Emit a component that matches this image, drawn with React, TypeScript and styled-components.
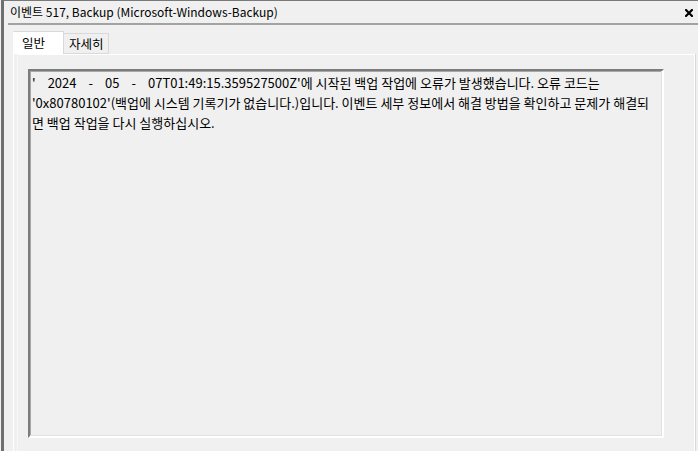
import React from "react";
import styled, { createGlobalStyle } from "styled-components";

const GlobalStyle = createGlobalStyle`
  html, body { margin: 0; padding: 0; background: #f0f0f0; overflow: hidden; }
  body { font-family: "Noto Sans CJK KR", "Noto Sans", sans-serif; }
`;

const Window = styled.div`
  width: 708px;
  height: 451px;
  margin-left: 1px;
  border-left: 3px solid #6f6f6f;
  border-top: 1px solid #7a7a7a;
  background: #f0f0f0;
  display: flex;
  flex-direction: column;
  box-sizing: border-box;
  font-size: 12px;
  color: #000;
`;

const TitleBar = styled.div`
  height: 22px;
  display: flex;
  align-items: center;
  justify-content: space-between;
  padding: 0 0 0 6px;
  width: 694px;
  box-sizing: border-box;
`;

const TitleText = styled.span`
  font-size: 12px;
  line-height: 22px;
  white-space: nowrap;
`;

const CloseButton = styled.button`
  border: 0;
  background: transparent;
  padding: 0;
  margin: 1px 5px 0 0;
  width: 8px;
  height: 8px;
  display: flex;
  cursor: default;
`;

const Divider = styled.div`
  height: 2px;
  margin-left: 4px;
  background: #a2a2a2;
`;

const Body = styled.div`
  flex: 1;
  display: flex;
  flex-direction: column;
  padding: 6px 0 0 9px;
  min-height: 0;
`;

const TabStrip = styled.div`
  display: flex;
  align-items: flex-end;
  height: 23px;
`;

const Tab = styled.div<{ $active?: boolean }>`
  box-sizing: border-box;
  height: ${(p) => (p.$active ? 23 : 21)}px;
  width: ${(p) => (p.$active ? 51 : 45)}px;
  background: ${(p) => (p.$active ? "#ffffff" : "#f0f0f0")};
  border: 1px solid #d9d9d9;
  border-bottom: ${(p) => (p.$active ? "0" : "1px solid #d9d9d9")};
  border-left: ${(p) => (p.$active ? "1px solid #ffffff" : "0")};
  display: flex;
  align-items: center;
  padding-left: ${(p) => (p.$active ? 8 : 5)}px;
  padding-bottom: ${(p) => (p.$active ? 2 : 0)}px;
  font-size: 12.5px;
`;

const TabBody = styled.div`
  flex: 1;
  border-left: 1px solid #ffffff;
  padding-left: 3px;
  display: flex;
  min-height: 0;
`;

const Panel = styled.div`
  width: 678px;
  box-sizing: border-box;
  border-top: 1px solid #ffffff;
  border-left: 1px solid #f8f8f8;
  border-right: 1px solid #ffffff;
  box-shadow: 1px 0 0 #d8d8d8;
  padding: 14px 0 0 10px;
`;

const MessageBox = styled.div`
  box-sizing: border-box;
  width: 636px;
  height: 369px;
  border-style: solid;
  border-width: 2px;
  border-color: #7c7c7c #ffffff #ffffff #7c7c7c;
  box-shadow: inset -1px -1px 0 #e2e2e2, inset 1px 1px 0 #a8a8a8;
  padding: 2px 0 0 2px;
  font-size: 13px;
  line-height: 20px;
  white-space: nowrap;
`;

const Line = styled.div`
  display: flex;
`;

const Tok = styled.span`
  margin-right: 12px;
`;

export default function App() {
  return (
    <>
      <GlobalStyle />
      <Window>
        <TitleBar>
          <TitleText>이벤트 517, Backup (Microsoft-Windows-Backup)</TitleText>
          <CloseButton aria-label="닫기">
            <svg width="8" height="8" viewBox="0 0 8 8">
              <path d="M1 1 L7 7 M7 1 L1 7" stroke="#000" strokeWidth="2.2" strokeLinecap="square" />
            </svg>
          </CloseButton>
        </TitleBar>
        <Divider />
        <Body>
          <TabStrip>
            <Tab $active>일반</Tab>
            <Tab>자세히</Tab>
          </TabStrip>
          <TabBody>
            <Panel>
              <MessageBox>
                <Line>
                  <Tok>'</Tok>
                  <Tok>2024</Tok>
                  <Tok>-</Tok>
                  <Tok>05</Tok>
                  <Tok>-</Tok>
                  <span>07T01:49:15.359527500Z'에 시작된 백업 작업에 오류가 발생했습니다. 오류 코드는</span>
                </Line>
                <Line>
                  '0x80780102'(백업에 시스템 기록기가 없습니다.)입니다. 이벤트 세부 정보에서 해결 방법을 확인하고 문제가 해결되
                </Line>
                <Line>면 백업 작업을 다시 실행하십시오.</Line>
              </MessageBox>
            </Panel>
          </TabBody>
        </Body>
      </Window>
    </>
  );
}
